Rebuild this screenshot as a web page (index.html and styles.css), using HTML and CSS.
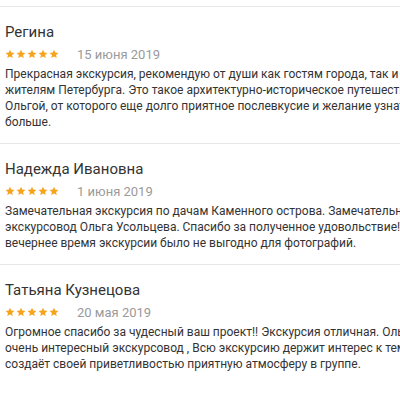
FILE: index.html
```html
<!DOCTYPE html>
<html>
<head>
	<meta charset="utf-8">
	<title>Отзывы</title>
	<link rel="stylesheet" href="styles.css">
</head>
<body>
	<svg width="0" height="0" class="defs">
		<symbol id="star" viewBox="0 0 24 24">
			<path d="M12 1.5l3.1 7.1 7.6.7-5.8 5 1.8 7.5L12 17.8l-6.7 4 1.8-7.5-5.8-5 7.6-.7z"/>
		</symbol>
	</svg>
	<div class="reviews">
		<div class="review">
			<div class="review-name">Регина</div>
			<div class="review-meta">
				<span class="stars">
					<svg><use href="#star"/></svg><svg><use href="#star"/></svg><svg><use href="#star"/></svg><svg><use href="#star"/></svg><svg><use href="#star"/></svg>
				</span>
				<span class="review-date">15 июня 2019</span>
			</div>
			<p class="review-text">Прекрасная экскурсия, рекомендую от души как гостям города, так и<br>жителям Петербурга. Это такое архитектурно-историческое путешествие с<br>Ольгой, от которого еще долго приятное послевкусие и желание узнать<br>больше.</p>
		</div>
		<div class="review">
			<div class="review-name">Надежда Ивановна</div>
			<div class="review-meta">
				<span class="stars">
					<svg><use href="#star"/></svg><svg><use href="#star"/></svg><svg><use href="#star"/></svg><svg><use href="#star"/></svg><svg><use href="#star"/></svg>
				</span>
				<span class="review-date">1 июня 2019</span>
			</div>
			<p class="review-text">Замечательная экскурсия по дачам Каменного острова. Замечательный<br>экскурсовод Ольга Усольцева. Спасибо за полученное удовольствие! Но<br>вечернее время экскурсии было не выгодно для фотографий.</p>
		</div>
		<div class="review">
			<div class="review-name">Татьяна Кузнецова</div>
			<div class="review-meta">
				<span class="stars">
					<svg><use href="#star"/></svg><svg><use href="#star"/></svg><svg><use href="#star"/></svg><svg><use href="#star"/></svg><svg><use href="#star"/></svg>
				</span>
				<span class="review-date">20 мая 2019</span>
			</div>
			<p class="review-text">Огромное спасибо за чудесный ваш проект!! Экскурсия отличная. Ольга<br>очень интересный экскурсовод , Всю экскурсию держит интерес к теме,<br>создаёт своей приветливостью приятную атмосферу в группе.</p>
		</div>
	</div>
</body>
</html>
```

FILE: styles.css
```css
body {
	font-family: Roboto, "Liberation Sans", sans-serif;
	background: #fff;
	margin: 0;
	overflow: hidden;
}
.defs {
	position: absolute;
}
.reviews {
	padding-top: 6px;
}
.review {
	border-top: 1px solid #e6e6e6;
	padding: 15px 0 13px 5px;
}
.review-name {
	font-size: 15px;
	line-height: 20px;
	color: #333;
}
.review-meta {
	display: flex;
	align-items: center;
	gap: 18px;
	margin-top: 3px;
	height: 18px;
}
.stars {
	display: flex;
	gap: 1px;
	fill: #f6a31e;
}
.stars svg {
	width: 10px;
	height: 10px;
}
.review-date {
	font-size: 13px;
	color: #9a9a9a;
}
.review-text {
	margin: 3px 0 0;
	font-size: 12px;
	line-height: 16px;
	color: #333;
	white-space: nowrap;
}
```
